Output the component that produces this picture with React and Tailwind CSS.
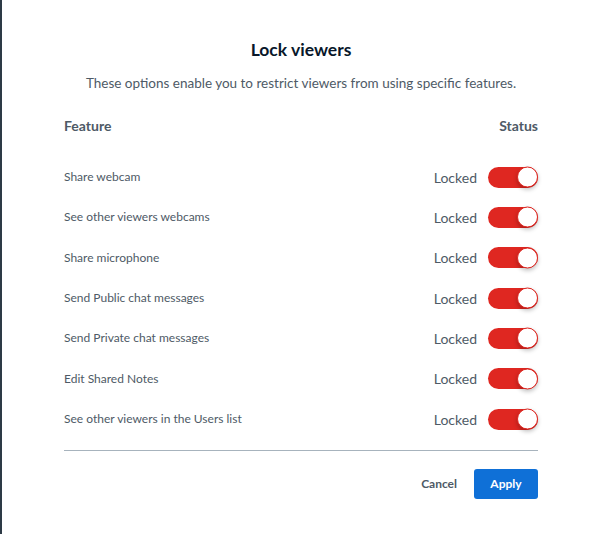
const features = [
  "Share webcam",
  "See other viewers webcams",
  "Share microphone",
  "Send Public chat messages",
  "Send Private chat messages",
  "Edit Shared Notes",
  "See other viewers in the Users list",
];

function Toggle() {
  return (
    <div className="relative h-[21px] w-[50px] rounded-full bg-[#df2721]">
      <div className="absolute right-0 top-1/2 h-[21px] w-[21px] -translate-y-1/2 rounded-full border border-[#df2721] bg-white shadow-[0_2px_4px_rgba(0,0,0,0.25)]" />
    </div>
  );
}

export default function App() {
  return (
    <div
      className="h-[534px] w-[600px] border-l-2 border-[#2d3a46] bg-white px-[62px]"
      style={{ fontFamily: "Lato, 'Noto Sans', sans-serif" }}
    >
      <h2 className="pt-[38px] text-center text-[17.5px] font-bold leading-6 text-[#08172a]">
        Lock viewers
      </h2>
      <p className="mt-[11px] text-center text-[13.5px] leading-5 text-[#4e5a66]">
        These options enable you to restrict viewers from using specific features.
      </p>
      <div className="mt-[25px] flex items-center justify-between text-[14px] font-bold leading-4 text-[#4e5a66]">
        <span>Feature</span>
        <span>Status</span>
      </div>
      <div className="mt-[23px]">
        {features.map((f) => (
          <div key={f} className="flex h-[40.33px] items-center justify-between">
            <span className="text-[12px] text-[#4e5a66]">{f}</span>
            <div className="flex items-center gap-[11px]">
              <span className="text-[14px] text-[#4e5a66]">Locked</span>
              <Toggle />
            </div>
          </div>
        ))}
      </div>
      <div className="mt-[11px] h-px bg-[#a7b3bd]" />
      <div className="mt-[18px] flex items-center justify-end gap-[17px]">
        <button className="text-[12px] font-bold text-[#4e5a66]">Cancel</button>
        <button className="h-[30px] w-[64px] rounded-[3px] bg-[#0f70d7] text-[12px] font-bold text-white">
          Apply
        </button>
      </div>
    </div>
  );
}
